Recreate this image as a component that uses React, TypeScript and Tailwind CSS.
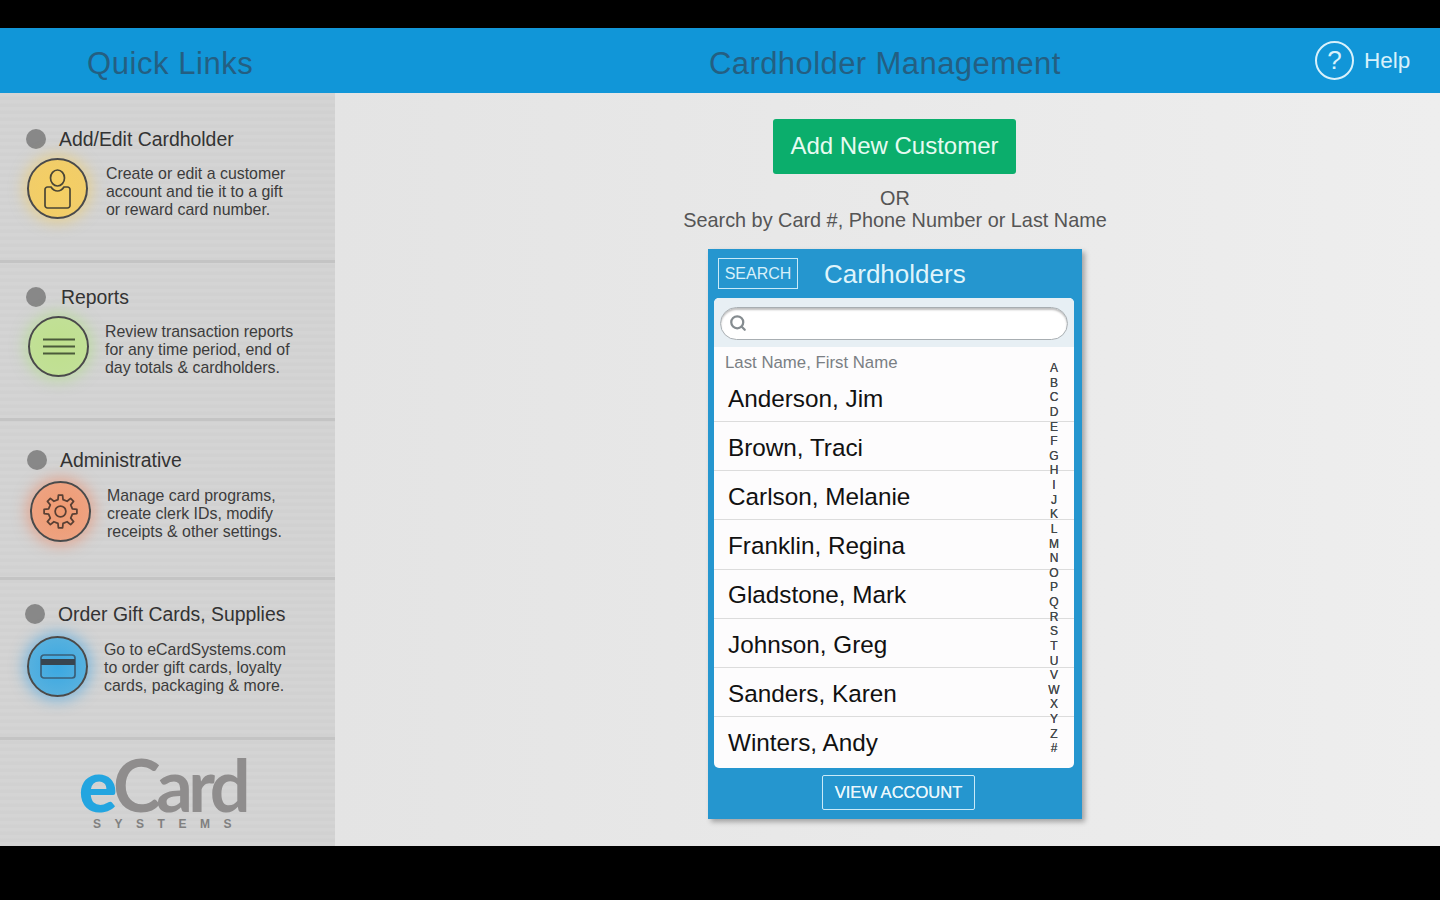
import React from 'react'
import { Search } from 'lucide-react'

const customers = [
  'Anderson, Jim',
  'Brown, Traci',
  'Carlson, Melanie',
  'Franklin, Regina',
  'Gladstone, Mark',
  'Johnson, Greg',
  'Sanders, Karen',
  'Winters, Andy',
]

const letters = 'ABCDEFGHIJKLMNOPQRSTUVWXYZ#'.split('')

function gearPath(cx: number, cy: number, outer: number, inner: number, teeth: number) {
  const pts: string[] = []
  const step = (Math.PI * 2) / teeth
  for (let i = 0; i < teeth; i++) {
    const a = i * step - Math.PI / 2
    const w = step * 0.2
    const list: [number, number][] = [
      [inner, a - w * 1.35],
      [outer, a - w * 0.8],
      [outer, a + w * 0.8],
      [inner, a + w * 1.35],
    ]
    list.forEach(([r, t]) => {
      pts.push(`${(cx + r * Math.cos(t)).toFixed(2)} ${(cy + r * Math.sin(t)).toFixed(2)}`)
    })
  }
  return `M${pts.join('L')}Z`
}

function UserIcon() {
  return (
    <svg width="27" height="40" viewBox="0 0 27 40" fill="none" stroke="#4a4636" strokeWidth="1.700">
      <ellipse cx="13.500" cy="9" rx="7" ry="8" />
      <path d="M7 18h-3.500a2.500 2.500 0 0 0-2.500 2.500v16a2.500 2.500 0 0 0 2.500 2.500h20a2.500 2.500 0 0 0 2.500-2.500v-16a2.500 2.500 0 0 0-2.500-2.500h-3.500c-2 3-3.500 4-6.500 4s-4.500-1-6.500-4z" />
    </svg>
  )
}

function ListIcon() {
  return (
    <svg width="32" height="17" viewBox="0 0 32 17" fill="none" stroke="#4b5a3a" strokeWidth="1.800">
      <path d="M0 1.500h32M0 8.500h32M0 15.500h32" />
    </svg>
  )
}

function GearIcon() {
  return (
    <svg width="35" height="35" viewBox="0 0 36 36" fill="none" stroke="#5a4034" strokeWidth="1.800">
      <path d={gearPath(18, 18, 17, 12.5, 8)} strokeLinejoin="round" />
      <circle cx="18" cy="18" r="5.500" />
    </svg>
  )
}

function CardIcon() {
  return (
    <svg width="36" height="25" viewBox="0 0 36 25" fill="none">
      <rect x="1" y="1" width="34" height="23" rx="3" stroke="#3a5f78" strokeWidth="1.700" />
      <rect x="1" y="5" width="34" height="6" fill="#38454f" />
    </svg>
  )
}

function QuickLink({
  title,
  lines,
  icon,
  circle,
  className,
  titleGap,
  textGap,
}: {
  title: string
  lines: string[]
  icon: React.ReactNode
  circle: string
  className: string
  titleGap: string
  textGap: string
}) {
  return (
    <div className={`border-b-[3px] border-[#c4c4c4] ${className}`}>
      <div className={`flex items-center ${titleGap}`}>
        <span className="h-5 w-5 shrink-0 rounded-full bg-[#888888]" />
        <span className="text-[19.4px] leading-6 text-[#333333]">{title}</span>
      </div>
      <div className={`flex items-center ${textGap}`}>
        <div className={`flex h-[61px] w-[61px] shrink-0 items-center justify-center rounded-full border-2 border-[#4a4a4a] ${circle}`}>
          {icon}
        </div>
        <p className="pt-[13px] text-[15.9px] leading-[18px] text-[#3c3c3c]">
          {lines.map((l) => (
            <span key={l} className="block whitespace-nowrap">{l}</span>
          ))}
        </p>
      </div>
    </div>
  )
}

export default function App() {
  return (
    <div className="flex h-[900px] w-[1440px] flex-col overflow-hidden bg-black font-['Liberation_Sans',Arial,sans-serif]">
      <div className="h-7 shrink-0 bg-black" />
      <header className="flex h-[65px] shrink-0 items-center bg-[#1196d8] text-[#245f82]">
        <div className="w-[335px] pt-[7px] pl-[87px] text-[31px] tracking-[0.55px]">Quick Links</div>
        <div className="w-[725px] pt-[7px] pl-[374px] text-[31px] whitespace-nowrap tracking-[0.42px]">Cardholder Management</div>
        <div className="ml-[255px] flex items-center gap-[10px] text-[22.5px] text-[#d8f1fb]">
          <span className="flex h-[39px] w-[39px] items-center justify-center rounded-full border-2 border-[#d8f1fb] text-[26px]">?</span>
          Help
        </div>
      </header>

      <div className="flex h-[753px] shrink-0">
        <aside className="flex w-[335px] shrink-0 flex-col bg-[#d3d3d3] bg-[repeating-linear-gradient(180deg,rgba(255,255,255,0.03)_0px,rgba(255,255,255,0.03)_3px,rgba(0,0,0,0.012)_4px,rgba(0,0,0,0.012)_7px)]">
          <QuickLink
            title="Add/Edit Cardholder"
            lines={['Create or edit a customer', 'account and tie it to a gift', 'or reward card number.']}
            icon={<UserIcon />}
            circle="mt-[7px] bg-[radial-gradient(circle,#f5cf62,#f0cc6c)] shadow-[0_0_14px_4px_rgba(245,205,90,0.5)]"
            className="h-[170px] pt-[34px] pl-[26px]"
            titleGap="gap-[13px]"
            textGap="gap-[18px] ml-[1px]"
          />
          <QuickLink
            title="Reports"
            lines={['Review transaction reports', 'for any time period, end of', 'day totals & cardholders.']}
            icon={<ListIcon />}
            circle="mt-[7px] bg-[radial-gradient(circle,#bfe08d,#c2e09a)] shadow-[0_0_14px_4px_rgba(170,225,120,0.5)]"
            className="h-[158px] pt-[22px] pl-[26px]"
            titleGap="gap-[15px]"
            textGap="gap-[16px] ml-[2px]"
          />
          <QuickLink
            title="Administrative"
            lines={['Manage card programs,', 'create clerk IDs, modify', 'receipts & other settings.']}
            icon={<GearIcon />}
            circle="mt-[9px] bg-[radial-gradient(circle,#f09a70,#eda587)] shadow-[0_0_14px_4px_rgba(240,130,90,0.5)]"
            className="h-[159px] pt-[27px] pl-[27px]"
            titleGap="gap-[13px]"
            textGap="gap-[16px] ml-[3px]"
          />
          <QuickLink
            title="Order Gift Cards, Supplies"
            lines={['Go to eCardSystems.com', 'to order gift cards, loyalty', 'cards, packaging & more.']}
            icon={<CardIcon />}
            circle="mt-[10px] bg-[radial-gradient(circle,#3aa8e2,#62b4dd)] shadow-[0_0_14px_4px_rgba(50,160,230,0.5)]"
            className="h-[160px] pt-[22px] pl-[25px]"
            titleGap="gap-[13px]"
            textGap="gap-[16px] ml-[2px]"
          />
          <div className="flex flex-1 flex-col items-center pr-[10px] pt-[13px]">
            <div className="flex items-baseline text-[72px] leading-[62px] font-bold font-['Lato',sans-serif] tracking-[-4.4px] text-[#8f8d8d]">
              <span className="font-black text-[#23a5e0]">e</span>
              <span>Card</span>
            </div>
            <div className="mt-[2px] ml-[13px] text-[12px] leading-[14px] font-bold tracking-[13.5px] text-[#808080]">SYSTEMS</div>
          </div>
        </aside>

        <main className="flex flex-1 flex-col items-center bg-[#e8e8e8] bg-[linear-gradient(90deg,#e4e4e4,#eeeeee)] pt-[26px] pl-[15px]">
          <button className="-ml-[1px] h-[55px] w-[243px] rounded-[3px] bg-[#0bae6c] pb-[2px] text-[24px] text-[#e6fbf1]">Add New Customer</button>
          <div className="mt-[13px] text-center text-[19.85px] leading-[22px] text-[#555555]">
            <div>OR</div>
            <div>Search by Card #, Phone Number or Last Name</div>
          </div>
          <section className="mt-[18px] flex h-[570px] w-[374px] flex-col bg-[#2596cf] pr-[8px] pl-[6px] shadow-[3px_3px_5px_rgba(0,0,0,0.3)]">
            <div className="flex h-[49px] shrink-0 items-start pt-[9px] pl-[4px]">
              <span className="flex h-[31px] w-[80px] items-center justify-center border border-[#c9eaf8] text-[16px] text-[#d6f0fa]">SEARCH</span>
              <span className="ml-[26px] text-[26px] leading-[33px] text-[#dff4fb]">Cardholders</span>
            </div>
            <div className="relative flex h-[470px] shrink-0 flex-col overflow-hidden rounded-[5px] bg-[#fdfcfd]">
              <div className="flex h-[49px] shrink-0 items-center bg-[#e7eff4] px-[6px] pt-[1px]">
                <div className="flex h-[33px] w-full items-center rounded-full border border-[#a8aeb2] bg-white pl-[8px] shadow-[inset_0_2px_2px_rgba(0,0,0,0.25)]">
                  <Search size={18} strokeWidth={3} className="text-[#858c90]" />
                </div>
              </div>
              <div className="h-[26px] shrink-0 pl-[11px] text-[16.8px] leading-[32px] text-[#7a7f84]">Last Name, First Name</div>
              {customers.map((c, i) => (
                <div
                  key={c}
                  className={`flex h-[49.15px] shrink-0 items-center border-b pt-[4px] pl-[14px] text-[24.3px] text-[#111111] ${i < customers.length - 1 ? 'border-[#dcdcdc]' : 'border-transparent'}`}
                >
                  {c}
                </div>
              ))}
              <div className="absolute top-[63px] right-[12px] flex w-[16px] flex-col items-center text-[12px] leading-[14.63px] text-[#44484b] [text-shadow:0_0_0.5px_#44484b]">
                {letters.map((l) => (
                  <span key={l}>{l}</span>
                ))}
              </div>
            </div>
            <div className="flex flex-1 items-start justify-center pt-[7px] pl-[9px]">
              <button className="h-[35px] w-[153px] rounded-[2px] border border-[#c9eaf8] text-[16.5px] text-[#e8f7fc] [text-shadow:0_0_0.6px_#ffffff]">VIEW ACCOUNT</button>
            </div>
          </section>
        </main>
      </div>
      <div className="flex-1 bg-black" />
    </div>
  )
}
